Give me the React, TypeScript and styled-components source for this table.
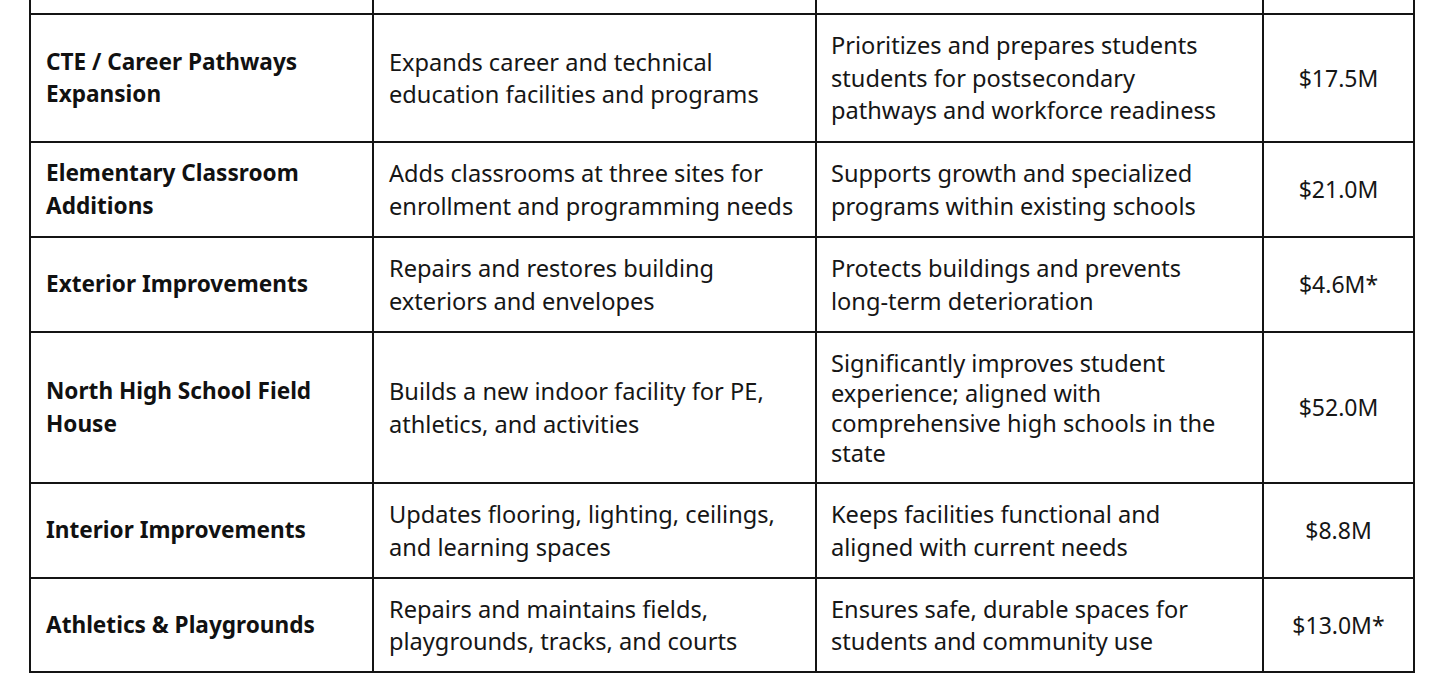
import React from "react";
import styled, { createGlobalStyle } from "styled-components";

const GlobalStyle = createGlobalStyle`
  html, body {
    margin: 0;
    padding: 0;
    background: #ffffff;
  }
  body {
    font-family: "Noto Sans", "Open Sans", sans-serif;
    color: #111111;
  }
`;

const Page = styled.div`
  width: 1440px;
  height: 686px;
  overflow: hidden;
  padding-left: 29px;
  box-sizing: border-box;
`;

const Table = styled.table`
  border-collapse: collapse;
  table-layout: fixed;
  width: 1384px;
`;

const Row = styled.tr<{ $h: number }>`
  height: ${(p) => p.$h}px;
`;

const Cell = styled.td<{ $lh?: number }>`
  border: 2px solid #141414;
  padding: 0 10px 0 15px;
  vertical-align: middle;
  font-size: 23.6px;
  line-height: ${(p) => p.$lh ?? 32.5}px;
  font-weight: 400;
  color: #161616;
`;

const TopCell = styled(Cell)`
  border-top: none;
  padding: 0;
`;

const Name = styled(Cell)`
  font-size: 22.6px;
  font-weight: 700;
  color: #111111;
`;

const Why = styled(Cell)`
  padding-left: 14px;
  padding-right: 34px;
`;

const Cost = styled(Cell)`
  font-size: 23px;
  text-align: center;
  padding: 0;
`;

interface Item {
  name: string;
  what: string;
  why: string;
  cost: string;
  h: number;
  lh?: number;
}

const items: Array<Item> = [
  {
    name: "CTE / Career Pathways Expansion",
    what: "Expands career and technical education facilities and programs",
    why: "Prioritizes and prepares students students for postsecondary pathways and workforce readiness",
    cost: "$17.5M",
    h: 128,
  },
  {
    name: "Elementary Classroom Additions",
    what: "Adds classrooms at three sites for enrollment and programming needs",
    why: "Supports growth and specialized programs within existing schools",
    cost: "$21.0M",
    h: 95,
  },
  {
    name: "Exterior Improvements",
    what: "Repairs and restores building exteriors and envelopes",
    why: "Protects buildings and prevents long-term deterioration",
    cost: "$4.6M*",
    h: 95,
  },
  {
    name: "North High School Field House",
    what: "Builds a new indoor facility for PE, athletics, and activities",
    why: "Significantly improves student experience; aligned with comprehensive high schools in the state",
    cost: "$52.0M",
    h: 151,
    lh: 30,
  },
  {
    name: "Interior Improvements",
    what: "Updates flooring, lighting, ceilings, and learning spaces",
    why: "Keeps facilities functional and aligned with current needs",
    cost: "$8.8M",
    h: 95,
  },
  {
    name: "Athletics & Playgrounds",
    what: "Repairs and maintains fields, playgrounds, tracks, and courts",
    why: "Ensures safe, durable spaces for students and community use",
    cost: "$13.0M*",
    h: 94,
  },
];

const App: React.FC = () => {
  return (
    <Page>
      <GlobalStyle />
      <Table>
        <colgroup>
          <col style={{ width: 343 }} />
          <col style={{ width: 443 }} />
          <col style={{ width: 447 }} />
          <col style={{ width: 151 }} />
        </colgroup>
        <tbody>
          <Row $h={14}>
            <TopCell />
            <TopCell />
            <TopCell />
            <TopCell />
          </Row>
          {items.map((item, index) => (
            <Row key={index} $h={item.h}>
              <Name>{item.name}</Name>
              <Cell>{item.what}</Cell>
              <Why $lh={item.lh}>{item.why}</Why>
              <Cost>{item.cost}</Cost>
            </Row>
          ))}
        </tbody>
      </Table>
    </Page>
  );
};

export default App;
